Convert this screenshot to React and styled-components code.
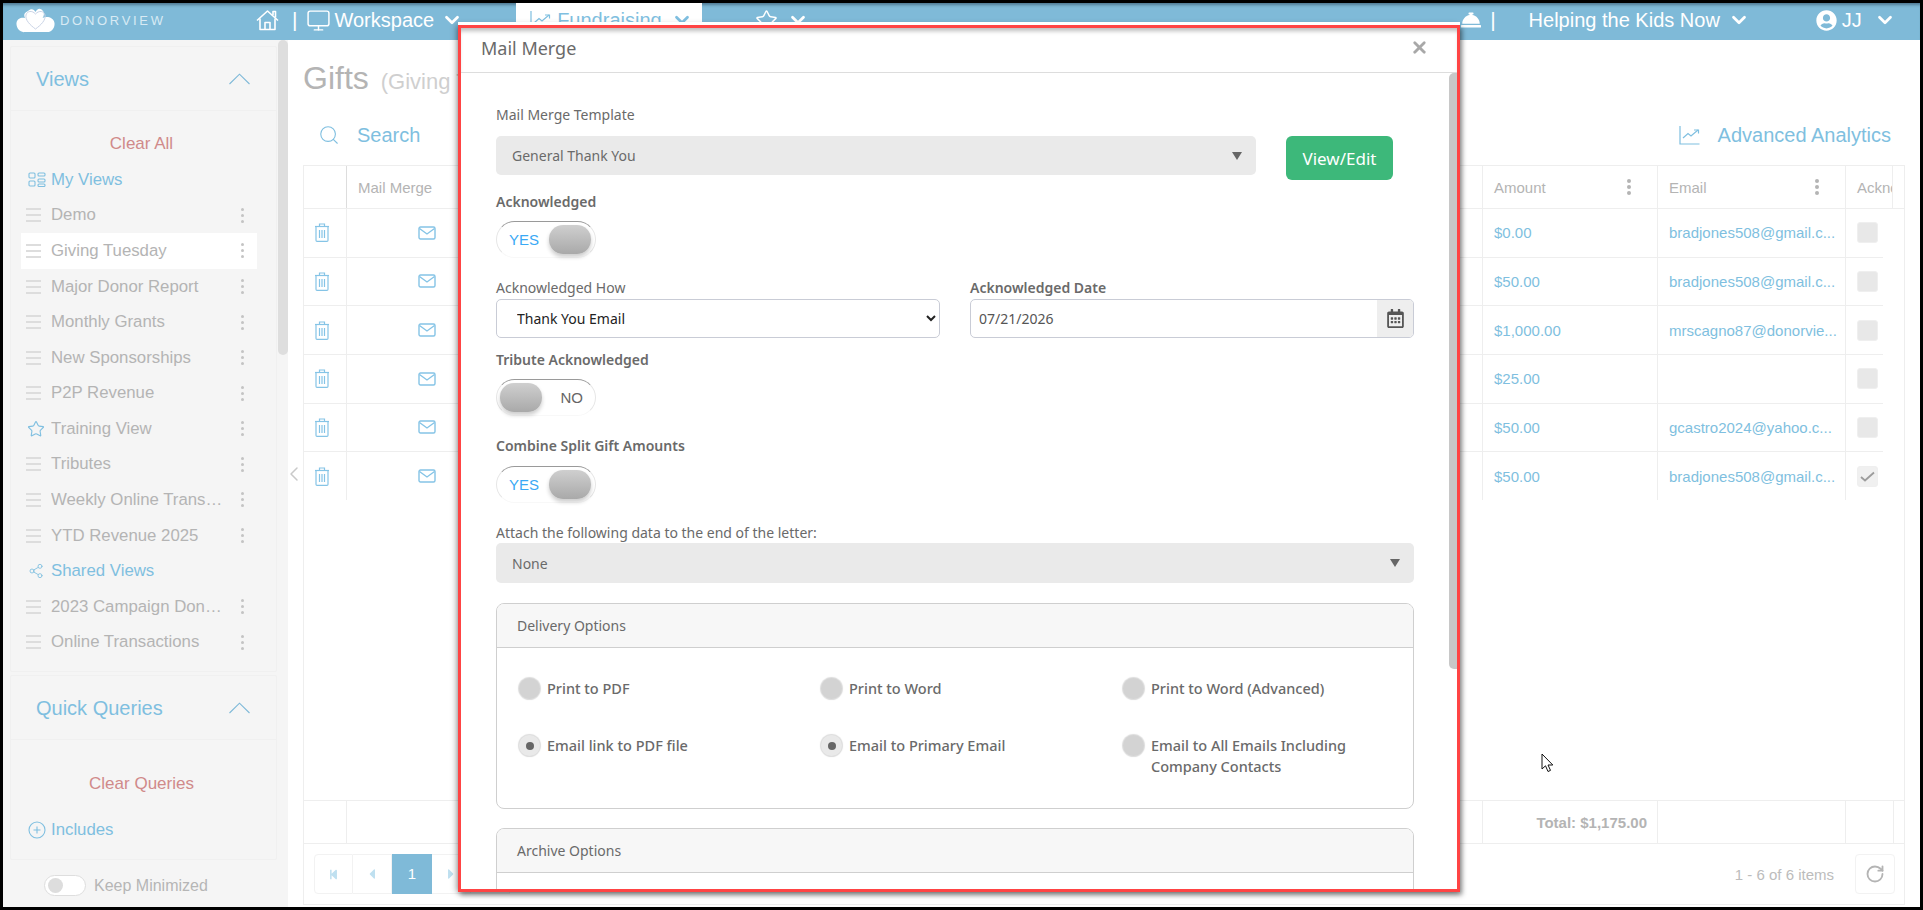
import React from 'react';
import styled, { createGlobalStyle } from 'styled-components';
import { ChevronDown, ChevronLeft, Monitor, Star, Search, Share2, RotateCw, X } from 'lucide-react';
import { FaConciergeBell, FaUserCircle, FaRegCalendarAlt, FaStepBackward, FaStepForward, FaCaretLeft, FaCaretRight } from 'react-icons/fa';

const sans = '"Liberation Sans", Arial, sans-serif';
const modalFont = '"Noto Sans", "Open Sans", sans-serif';
const blue = '#7fbfe0';
const line = '#eeeeee';

const GlobalStyle = createGlobalStyle`
  html, body {
    margin: 0;
    padding: 0;
    overflow: hidden;
    background: #000;
  }
  * {
    box-sizing: border-box;
  }
`;

const Frame = styled.div`
  position: relative;
  display: flex;
  flex-direction: column;
  width: 1923px;
  height: 910px;
  border: 3px solid #000;
  background: #fff;
  font-family: ${sans};
  overflow: hidden;
`;

/* top bar */
const TopBar = styled.header`
  display: flex;
  align-items: flex-start;
  flex: 0 0 37px;
  height: 37px;
  background: #7fbad8;
  box-shadow: inset 0 4px 3px -2px rgba(40, 70, 90, 0.55);
  color: #fff;
  font-size: 20px;
`;

const Logo = styled.div`
  display: flex;
  align-items: center;
  gap: 5px;
  width: 253px;
  height: 34px;
  padding-left: 13px;
`;

const LogoText = styled.span`
  color: #d8eaf4;
  font-size: 13px;
  letter-spacing: 2.7px;
`;

const NavItem = styled.div`
  display: flex;
  align-items: center;
  height: 34px;
  gap: ${(p) => p.$gap ?? 6}px;
  margin-left: ${(p) => p.$left ?? 0}px;
  white-space: nowrap;
`;

const NavChevron = styled(ChevronDown)`
  flex: none;
  margin-left: ${(p) => p.$left ?? 0}px;
`;

const ActiveTab = styled.div`
  display: flex;
  align-items: center;
  gap: 6px;
  width: 186px;
  height: 34px;
  margin-left: 53px;
  padding-left: 14px;
  background: #fff;
  color: ${blue};
`;

const Divider = styled.span`
  margin-left: ${(p) => p.$left}px;
  line-height: 34px;
  font-size: 21px;
`;

/* page body */
const Body = styled.div`
  display: flex;
  flex: 1;
  min-height: 0;
`;

const Sidebar = styled.aside`
  display: flex;
  flex-direction: column;
  flex: 0 0 285px;
  min-width: 0;
  background: #f5f5f5;
`;

const SideScroll = styled.div`
  display: flex;
  flex: 1;
  min-height: 0;
  padding-left: 7px;
  overflow: hidden;
`;

const PanelColumn = styled.div`
  flex: 0 0 267px;
  min-width: 0;
  padding-top: 6px;
  margin-right: 1px;
`;

const ThumbColumn = styled.div`
  flex: 0 0 10px;
`;

const SideThumb = styled.div`
  height: 315px;
  border-radius: 5px;
  background: #dedede;
`;

const Panel = styled.section`
  margin-top: ${(p) => p.$top ?? 0}px;
  padding-bottom: 11px;
  border: 1px solid #f0f0f0;
  border-radius: 2px;
`;

const PanelHead = styled.div`
  display: flex;
  align-items: center;
  justify-content: space-between;
  height: 64px;
  padding: 1px 26px 0 25px;
  border-bottom: 1px solid #f0f0f0;
  color: ${blue};
  font-size: 20px;
`;

const ClearLink = styled.div`
  height: 36px;
  margin-top: ${(p) => p.$top}px;
  padding-right: 4px;
  color: #d08a8a;
  font-size: 17px;
  line-height: 36px;
  text-align: center;
`;

const SideRow = styled.div`
  display: flex;
  align-items: center;
  height: 35.58px;
  margin: ${(p) => p.$top ?? 0}px 19px 0 10px;
  padding-left: 5px;
  background: ${(p) => (p.$active ? '#fff' : 'transparent')};
  color: ${(p) => (p.$link ? blue : '#b4b4b4')};
  font-size: 16.8px;
`;

const RowIcon = styled.span`
  display: flex;
  align-items: center;
  flex: 0 0 25px;
  padding-left: ${(p) => p.$inset ?? 0}px;
`;

const RowLabel = styled.span`
  flex: 1;
  min-width: 0;
  padding-right: 6px;
  overflow: hidden;
  text-overflow: ellipsis;
  white-space: nowrap;
`;

const RowKebab = styled.span`
  display: flex;
  flex: 0 0 28px;
  flex-direction: column;
  align-items: center;
  gap: 3px;
  padding-right: 1px;
  i {
    width: 3px;
    height: 3px;
    border-radius: 50%;
    background: #c4c4c4;
  }
`;

const MinimizeBar = styled.div`
  display: flex;
  align-items: center;
  flex: 0 0 46px;
  gap: 8px;
  padding: 3px 0 0 41px;
  color: #b6b6b6;
  font-size: 16px;
`;

const MiniSwitch = styled.span`
  display: flex;
  align-items: center;
  width: 42px;
  height: 21px;
  padding-left: 3px;
  border: 1px solid #dedede;
  border-radius: 11px;
  background: #fff;
  &::before {
    content: '';
    width: 15px;
    height: 15px;
    border-radius: 50%;
    background: #dddddd;
  }
`;

/* main table area */
const Gutter = styled.div`
  display: flex;
  align-items: center;
  flex: 0 0 15px;
  min-width: 0;
  color: #c9c9c9;
`;

const GutterChevron = styled(ChevronLeft)`
  flex: none;
  margin-left: -6px;
`;

const Main = styled.main`
  display: flex;
  flex-direction: column;
  flex: 1;
  min-width: 0;
  padding: 0 15px 2px 0;
`;

const TitleRow = styled.div`
  display: flex;
  align-items: baseline;
  gap: 12px;
  height: 58px;
  padding-top: 19px;
  line-height: 38px;
`;

const Title = styled.h1`
  margin: 0;
  color: #b4b4b4;
  font-size: 32px;
  font-weight: 400;
`;

const TitleNote = styled.span`
  color: #cfcfcf;
  font-size: 22px;
`;

const Toolbar = styled.div`
  display: flex;
  align-items: center;
  justify-content: space-between;
  height: 38px;
  margin: 18px 0 11px;
  padding: 0 14px 0 15px;
  color: ${blue};
  font-size: 20px;
`;

const ToolGroup = styled.div`
  display: flex;
  align-items: center;
  gap: ${(p) => p.$gap}px;
`;

const Table = styled.div`
  display: flex;
  flex-direction: column;
  flex: 1;
  min-height: 0;
  border: 1px solid ${line};
`;

const HeadRow = styled.div`
  display: grid;
  flex: 0 0 43px;
  grid-template-columns: 43px 1136px 175px 188px 47px 1fr;
  border-bottom: 1px solid ${line};
  color: #b4b4b4;
  font-size: 15px;
`;

const HeadCell = styled.div`
  display: flex;
  align-items: center;
  justify-content: space-between;
  padding: 0 26px 0 11px;
  overflow: hidden;
  white-space: nowrap;
  border-right: 1px solid ${(p) => (p.$strong ? '#dddddd' : line)};
`;

const HeadKebab = styled.span`
  display: flex;
  flex-direction: column;
  gap: 2px;
  i {
    width: 4px;
    height: 4px;
    border-radius: 50%;
    background: #b4b4b4;
  }
`;

const DataRow = styled.div`
  display: grid;
  flex: 0 0 48.67px;
  grid-template-columns: 43px 1136px 175px 188px 37px;
  width: 1579px;
  border-bottom: 1px solid ${(p) => (p.$last ? 'transparent' : line)};
  color: ${blue};
  font-size: 15px;
`;

const Cell = styled.div`
  display: flex;
  align-items: center;
  padding-left: ${(p) => p.$pad ?? 11}px;
  border-right: 1px solid ${(p) => (p.$bare ? 'transparent' : line)};
  overflow: hidden;
  white-space: nowrap;
`;

const CheckBox = styled.span`
  display: flex;
  align-items: center;
  justify-content: center;
  width: 21px;
  height: 21px;
  border: 1px solid #efefef;
  border-radius: 3px;
  background: ${(p) => (p.$checked ? '#f0f0f0' : '#e8e8e8')};
  color: #9c9c9c;
`;

const TableSpace = styled.div`
  flex: 1;
`;

const TotalRow = styled.div`
  display: grid;
  flex: 0 0 44px;
  grid-template-columns: 43px 1136px 175px 188px 48px 1fr;
  border-top: 1px solid ${line};
  border-bottom: 1px solid ${line};
`;

const TotalCell = styled.div`
  display: flex;
  align-items: center;
  justify-content: flex-end;
  padding-right: 10px;
  border-right: 1px solid ${line};
  color: #b4b4b4;
  font-size: 15px;
  font-weight: 700;
`;

const Pager = styled.div`
  display: flex;
  align-items: center;
  justify-content: space-between;
  flex: 0 0 60px;
  padding: 0 9px 0 10px;
`;

const PagerGroup = styled.div`
  display: flex;
  align-items: center;
`;

const PageButton = styled.span`
  display: flex;
  align-items: center;
  justify-content: center;
  width: 39px;
  height: 40px;
  border: 1px solid #f2f2f2;
  border-left-width: ${(p) => (p.$first ? 1 : 0)}px;
  border-radius: ${(p) => (p.$first ? '4px 0 0 4px' : '0')};
  color: #bfe0f0;
`;

const PageCurrent = styled.span`
  width: 40px;
  height: 40px;
  background: #7fbad8;
  color: #fff;
  font-size: 15px;
  line-height: 40px;
  text-align: center;
`;

const PageInfo = styled.span`
  margin-right: 21px;
  color: #bcbcbc;
  font-size: 15px;
`;

const RefreshButton = styled.span`
  display: flex;
  align-items: center;
  justify-content: center;
  width: 40px;
  height: 40px;
  border: 1px solid #f2f2f2;
  border-radius: 4px;
  color: #b4b4b4;
`;

/* modal */
const Modal = styled.div`
  position: absolute;
  top: 22px;
  left: 455px;
  display: flex;
  flex-direction: column;
  width: 1002px;
  height: 867px;
  border: 3.5px solid #ff4444;
  background: #fff;
  box-shadow: 0 -3px 0 #fff, 2px 3px 5px rgba(0, 0, 0, 0.45), -2px 0 6px rgba(0, 0, 0, 0.3);
  color: #6a6a6a;
  font-family: ${modalFont};
  overflow: hidden;
  z-index: 10;
`;

const ModalHead = styled.div`
  display: flex;
  align-items: center;
  justify-content: space-between;
  flex: 0 0 45px;
  padding: 0 28px 5px 20px;
  border-bottom: 1px solid #dddddd;
  box-shadow: inset 0 5px 4px -2px #bdbdbd;
  font-size: 18px;
`;

const CloseIcon = styled(X)`
  color: #a8a8a8;
`;

const ModalBody = styled.div`
  display: flex;
  flex: 1;
  min-height: 0;
`;

const ModalContent = styled.div`
  flex: 1;
  min-width: 0;
  padding: 32px 35px 0;
`;

const ModalTrack = styled.div`
  flex: 0 0 8px;
`;

const ModalThumb = styled.div`
  height: 596px;
  border-radius: 5px 0 0 5px;
  background: #c8c8c8;
`;

const FieldLabel = styled.div`
  height: 20px;
  margin-top: ${(p) => p.$top ?? 0}px;
  font-size: 14px;
  font-weight: ${(p) => (p.$strong ? 600 : 400)};
  line-height: 20px;
`;

const TemplateRow = styled.div`
  display: flex;
  align-items: flex-start;
  gap: 30px;
  margin-top: 11px;
`;

const GreySelect = styled.div`
  display: flex;
  align-items: center;
  justify-content: space-between;
  flex: ${(p) => (p.$wide ? '1' : '0 0 760px')};
  height: ${(p) => (p.$wide ? 40 : 39)}px;
  padding: 0 14px 0 16px;
  border-radius: 5px;
  background: #eaeaea;
  font-size: 14px;
`;

const Caret = styled.span`
  width: 0;
  height: 0;
  border-left: 5px solid transparent;
  border-right: 5px solid transparent;
  border-top: 8px solid #666;
`;

const GreenButton = styled.button`
  width: 107px;
  height: 44px;
  padding: 0;
  border: 0;
  border-radius: 6px;
  background: #3db87a;
  color: #fff;
  font-family: inherit;
  font-size: 17px;
`;

const Toggle = styled.div`
  display: flex;
  align-items: flex-start;
  justify-content: space-between;
  width: 100px;
  height: 37px;
  margin-top: ${(p) => p.$top}px;
  padding: 3px 4px 0 ${(p) => (p.$on ? 12 : 3)}px;
  border: 1px solid #e6e6e6;
  border-top-color: #9a9a9a;
  border-bottom-color: #f8f8f8;
  border-radius: 19px;
  color: ${(p) => (p.$on ? '#3aa9f5' : '#666')};
  font-family: ${sans};
  font-size: 15px;
  line-height: 29px;
`;

const Knob = styled.span`
  width: 42px;
  height: 29px;
  border-radius: 14px;
  background: linear-gradient(#cfcfcf, #a9a9a9);
  box-shadow: 0 3px 4px rgba(0, 0, 0, 0.2);
`;

const NoText = styled.span`
  margin-right: 8px;
`;

const DateGrid = styled.div`
  display: grid;
  grid-template-columns: 444px 444px;
  column-gap: 30px;
  margin-top: 20px;
`;

const NativeSelect = styled.select`
  display: block;
  width: 100%;
  height: 39px;
  margin-top: 1px;
  padding: 0 5px 0 16px;
  border: 1px solid #c9ccd6;
  border-radius: 5px;
  background: #fff;
  color: #222;
  font-family: inherit;
  font-size: 14px;
`;

const DateBox = styled.div`
  display: flex;
  height: 39px;
  margin-top: 1px;
  border: 1px solid #c9ccd6;
  border-radius: 5px;
  overflow: hidden;
`;

const DateValue = styled.div`
  flex: 1;
  padding-left: 8px;
  color: #555;
  font-size: 14px;
  line-height: 37px;
`;

const DateAddon = styled.div`
  display: flex;
  align-items: center;
  justify-content: center;
  flex: 0 0 36px;
  background: #eeeeee;
  color: #555;
`;

const OptionsPanel = styled.section`
  margin-top: ${(p) => p.$top}px;
  border: 1px solid #cfcfcf;
  border-radius: 8px;
  overflow: hidden;
`;

const OptionsHead = styled.div`
  height: 44px;
  padding-left: 20px;
  border-bottom: 1px solid #cfcfcf;
  background: #f7f7f7;
  font-size: 14px;
  line-height: 43px;
`;

const OptionsGrid = styled.div`
  display: grid;
  grid-template-columns: repeat(3, 302px);
  grid-auto-rows: 57px;
  height: 160px;
  padding: 30px 0 0 22px;
`;

const RadioOption = styled.div`
  display: flex;
  align-items: flex-start;
  gap: 7px;
  font-size: 14.5px;
  font-weight: 500;
  line-height: 21px;
`;

const RadioDot = styled.span`
  display: flex;
  align-items: center;
  justify-content: center;
  flex: 0 0 21px;
  height: 21px;
  border-radius: 50%;
  background: ${(p) => (p.$checked ? '#e9e9e9' : '#d3d3d3')};
  box-shadow: 0 0 1px 1px #dcdcdc;
  &::after {
    content: '';
    display: ${(p) => (p.$checked ? 'block' : 'none')};
    width: 8px;
    height: 8px;
    border-radius: 50%;
    background: #666;
  }
`;

const Cursor = styled.svg`
  position: absolute;
  top: 750px;
  left: 1538px;
  z-index: 20;
`;

/* drawn icons */
const LogoMark = () => (
  <svg width="39" height="25" viewBox="0 0 39 25">
    <path d="M12 3c3-3 6-2 7.500 1C21 1 24-1 27 3c1.500 2 1 5-.5 7 4-2 11-1 12 5 .5 5-3 9-7 9H9c-5 1-9-4-8.500-9C1 10 6 9 9 10c-1.500-3-1-5 3-7z" fill="#fff" />
    <path d="M19.500 21C14 17 9 12 10 7c1-4 6-5 9.500-1 3.500-4 8.500-3 9.500 1 1 5-4 10-9.500 14z" fill="none" stroke="#c9d3e6" strokeWidth="1" />
  </svg>
);

const HomeIcon = () => (
  <svg width="23" height="22" viewBox="0 0 23 22" fill="none" stroke="#fff" strokeWidth="1.600" strokeLinejoin="round">
    <path d="M1 11.500 11.500 2 22 11.500" />
    <path d="M4 9.500V20.500H19V9.500" />
    <path d="M9 20.500V13.500H14V20.500" />
    <path d="M17 6V2.500H19.500V8.500" />
  </svg>
);

const ChartIcon = ({ color }) => (
  <svg width="21" height="19" viewBox="0 0 21 19" fill="none" stroke={color} strokeWidth="1.200">
    <path d="M1 0V18H20.500" />
    <path d="M4 12 9 7.500 12 10 19 4" />
    <path d="M15 4H19.500V7.500" />
  </svg>
);

const BurgerIcon = () => (
  <svg width="15" height="14" viewBox="0 0 15 14" fill="#dddddd">
    <rect y="0" width="15" height="2" />
    <rect y="6" width="15" height="2" />
    <rect y="12" width="15" height="2" />
  </svg>
);

const ViewsIcon = () => (
  <svg width="18" height="15" viewBox="0 0 18 15" fill="none" stroke={blue} strokeWidth="1.100">
    <rect x="1" y="1" width="6" height="5" rx="1" />
    <rect x="10" y="1" width="7" height="3" rx="1" />
    <rect x="1" y="9" width="6" height="5" rx="1" />
    <rect x="10" y="7" width="7" height="3" rx="1" />
    <rect x="10" y="12" width="7" height="2.500" rx="1" />
  </svg>
);

const PlusCircle = () => (
  <svg width="18" height="18" viewBox="0 0 18 18" fill="none" stroke={blue} strokeWidth="1.100">
    <circle cx="9" cy="9" r="8" />
    <path d="M9 5.500V12.500M5.500 9H12.500" />
  </svg>
);

const CollapseIcon = () => (
  <svg width="21" height="12" viewBox="0 0 21 12" fill="none" stroke="#7fb9d8" strokeWidth="1.100">
    <path d="M.5 11 10.500 1.200 20.500 11" />
  </svg>
);

const TrashIcon = () => (
  <svg width="16" height="19" viewBox="0 0 16 19" fill="none" stroke="#85c4e6" strokeWidth="1.200">
    <path d="M1 3.500H15" />
    <path d="M5.500 3V1H10.500V3" />
    <path d="M2 4V17.200C2 17.800 2.500 18.300 3 18.300H13C13.500 18.300 14 17.800 14 17.200V4" />
    <path d="M5.500 7V15M8 7V15M10.500 7V15" />
  </svg>
);

const MailIcon = () => (
  <svg width="18" height="14" viewBox="0 0 18 14" fill="none" stroke="#85c4e6" strokeWidth="1.400">
    <rect x="1" y="1" width="16" height="12" rx="1.500" />
    <path d="M1.500 2.500 9 8 16.500 2.500" />
  </svg>
);

const CheckMark = () => (
  <svg width="15" height="11" viewBox="0 0 15 11" fill="none" stroke="currentColor" strokeWidth="1.800">
    <path d="M1 6 5 9.500 14 1.500" />
  </svg>
);

const Kebab = () => (
  <RowKebab>
    <i />
    <i />
    <i />
  </RowKebab>
);

const viewRows = [
  { label: 'Demo' },
  { label: 'Giving Tuesday', active: true },
  { label: 'Major Donor Report' },
  { label: 'Monthly Grants' },
  { label: 'New Sponsorships' },
  { label: 'P2P Revenue' },
  { label: 'Training View', star: true },
  { label: 'Tributes' },
  { label: 'Weekly Online Transactions' },
  { label: 'YTD Revenue 2025' },
];

const sharedRows = ['2023 Campaign Donations', 'Online Transactions'];

const gifts = [
  { amount: '$0.00', email: 'bradjones508@gmail.c...' },
  { amount: '$50.00', email: 'bradjones508@gmail.c...' },
  { amount: '$1,000.00', email: 'mrscagno87@donorvie...' },
  { amount: '$25.00', email: '' },
  { amount: '$50.00', email: 'gcastro2024@yahoo.c...' },
  { amount: '$50.00', email: 'bradjones508@gmail.c...', checked: true },
];

function ViewRow({ label, active, star }) {
  return (
    <SideRow $active={active}>
      <RowIcon $inset={star ? 1 : 0}>
        {star ? <Star size={18} color={blue} strokeWidth={1.500} /> : <BurgerIcon />}
      </RowIcon>
      <RowLabel>{label}</RowLabel>
      <Kebab />
    </SideRow>
  );
}

function OnOff({ on, top }) {
  return (
    <Toggle $on={on} $top={top}>
      {on ? (
        <>
          YES
          <Knob />
        </>
      ) : (
        <>
          <Knob />
          <NoText>NO</NoText>
        </>
      )}
    </Toggle>
  );
}

export default function App() {
  return (
    <Frame>
      <GlobalStyle />
      <TopBar>
        <Logo>
          <LogoMark />
          <LogoText>DONORVIEW</LogoText>
        </Logo>
        <NavItem>
          <HomeIcon />
        </NavItem>
        <Divider $left={13}>|</Divider>
        <NavItem $left={9} $gap={3}>
          <Monitor size={25} strokeWidth={1.400} />
          Workspace
          <NavChevron size={22} strokeWidth={3} $left={4} />
        </NavItem>
        <ActiveTab>
          <ChartIcon color={blue} />
          Fundraising
          <NavChevron size={22} strokeWidth={3} $left={3} />
        </ActiveTab>
        <NavItem $left={53} $gap={9}>
          <Star size={23} strokeWidth={1.500} />
          <NavChevron size={22} strokeWidth={3} />
        </NavItem>
        <NavItem $left={652}>
          <FaConciergeBell size={20} />
        </NavItem>
        <Divider $left={9}>|</Divider>
        <NavItem $left={33} $gap={8}>
          Helping the Kids Now
          <NavChevron size={22} strokeWidth={3} />
        </NavItem>
        <NavItem $left={66} $gap={5}>
          <FaUserCircle size={21} />
          JJ
          <NavChevron size={22} strokeWidth={3} $left={7} />
        </NavItem>
      </TopBar>

      <Body>
        <Sidebar>
          <SideScroll>
            <PanelColumn>
              <Panel>
                <PanelHead>
                  Views
                  <CollapseIcon />
                </PanelHead>
                <ClearLink $top={15}>Clear All</ClearLink>
                <SideRow $link>
                  <RowIcon $inset={2}>
                    <ViewsIcon />
                  </RowIcon>
                  <RowLabel>My Views</RowLabel>
                </SideRow>
                {viewRows.map((row) => (
                  <ViewRow key={row.label} {...row} />
                ))}
                <SideRow $link>
                  <RowIcon $inset={2}>
                    <Share2 size={16} strokeWidth={1.300} />
                  </RowIcon>
                  <RowLabel>Shared Views</RowLabel>
                </SideRow>
                {sharedRows.map((label) => (
                  <ViewRow key={label} label={label} />
                ))}
              </Panel>
              <Panel $top={3}>
                <PanelHead>
                  Quick Queries
                  <CollapseIcon />
                </PanelHead>
                <ClearLink $top={26}>Clear Queries</ClearLink>
                <SideRow $link $top={10}>
                  <RowIcon $inset={2}>
                    <PlusCircle />
                  </RowIcon>
                  <RowLabel>Includes</RowLabel>
                </SideRow>
              </Panel>
            </PanelColumn>
            <ThumbColumn>
              <SideThumb />
            </ThumbColumn>
          </SideScroll>
          <MinimizeBar>
            <MiniSwitch />
            Keep Minimized
          </MinimizeBar>
        </Sidebar>

        <Gutter>
          <GutterChevron size={24} strokeWidth={1.500} />
        </Gutter>

        <Main>
          <TitleRow>
            <Title>Gifts</Title>
            <TitleNote>(Giving Tuesday)</TitleNote>
          </TitleRow>
          <Toolbar>
            <ToolGroup $gap={17}>
              <Search size={22} strokeWidth={1.200} />
              Search
            </ToolGroup>
            <ToolGroup $gap={18}>
              <ChartIcon color={blue} />
              Advanced Analytics
            </ToolGroup>
          </Toolbar>

          <Table>
            <HeadRow>
              <HeadCell $strong />
              <HeadCell>Mail Merge</HeadCell>
              <HeadCell>
                Amount
                <HeadKebab>
                  <i />
                  <i />
                  <i />
                </HeadKebab>
              </HeadCell>
              <HeadCell>
                Email
                <HeadKebab>
                  <i />
                  <i />
                  <i />
                </HeadKebab>
              </HeadCell>
              <HeadCell>Acknowledged</HeadCell>
            </HeadRow>

            {gifts.map((gift, i) => (
              <DataRow key={i} $last={i === gifts.length - 1}>
                <Cell $pad={10}>
                  <TrashIcon />
                </Cell>
                <Cell $pad={71}>
                  <MailIcon />
                </Cell>
                <Cell>{gift.amount}</Cell>
                <Cell>{gift.email}</Cell>
                <Cell $bare>
                  <CheckBox $checked={gift.checked}>{gift.checked && <CheckMark />}</CheckBox>
                </Cell>
              </DataRow>
            ))}

            <TableSpace />

            <TotalRow>
              <TotalCell />
              <TotalCell />
              <TotalCell>Total: $1,175.00</TotalCell>
              <TotalCell />
              <TotalCell />
            </TotalRow>

            <Pager>
              <PagerGroup>
                <PageButton $first>
                  <FaStepBackward size={11} />
                </PageButton>
                <PageButton>
                  <FaCaretLeft size={16} />
                </PageButton>
                <PageCurrent>1</PageCurrent>
                <PageButton>
                  <FaCaretRight size={16} />
                </PageButton>
                <PageButton>
                  <FaStepForward size={11} />
                </PageButton>
              </PagerGroup>
              <PagerGroup>
                <PageInfo>1 - 6 of 6 items</PageInfo>
                <RefreshButton>
                  <RotateCw size={20} strokeWidth={2.200} />
                </RefreshButton>
              </PagerGroup>
            </Pager>
          </Table>
        </Main>
      </Body>

      <Modal>
        <ModalHead>
          Mail Merge
          <CloseIcon size={19} strokeWidth={3.500} />
        </ModalHead>
        <ModalBody>
          <ModalContent>
            <FieldLabel>Mail Merge Template</FieldLabel>
            <TemplateRow>
              <GreySelect>
                General Thank You
                <Caret />
              </GreySelect>
              <GreenButton>View/Edit</GreenButton>
            </TemplateRow>

            <FieldLabel $strong $top={12}>
              Acknowledged
            </FieldLabel>
            <OnOff on top={9} />

            <DateGrid>
              <div>
                <FieldLabel>Acknowledged How</FieldLabel>
                <NativeSelect defaultValue="Thank You Email">
                  <option>Thank You Email</option>
                  <option>Letter</option>
                  <option>Phone Call</option>
                </NativeSelect>
              </div>
              <div>
                <FieldLabel $strong>Acknowledged Date</FieldLabel>
                <DateBox>
                  <DateValue>07/21/2026</DateValue>
                  <DateAddon>
                    <FaRegCalendarAlt size={19} />
                  </DateAddon>
                </DateBox>
              </div>
            </DateGrid>

            <FieldLabel $strong $top={12}>
              Tribute Acknowledged
            </FieldLabel>
            <OnOff top={9} />

            <FieldLabel $strong $top={20}>
              Combine Split Gift Amounts
            </FieldLabel>
            <OnOff on top={10} />

            <FieldLabel $top={20}>Attach the following data to the end of the letter:</FieldLabel>
            <GreySelect $wide>
              None
              <Caret />
            </GreySelect>

            <OptionsPanel $top={20}>
              <OptionsHead>Delivery Options</OptionsHead>
              <OptionsGrid>
                <RadioOption>
                  <RadioDot />
                  Print to PDF
                </RadioOption>
                <RadioOption>
                  <RadioDot />
                  Print to Word
                </RadioOption>
                <RadioOption>
                  <RadioDot />
                  Print to Word (Advanced)
                </RadioOption>
                <RadioOption>
                  <RadioDot $checked />
                  Email link to PDF file
                </RadioOption>
                <RadioOption>
                  <RadioDot $checked />
                  Email to Primary Email
                </RadioOption>
                <RadioOption>
                  <RadioDot />
                  <span>
                    Email to All Emails Including
                    <br />
                    Company Contacts
                  </span>
                </RadioOption>
              </OptionsGrid>
            </OptionsPanel>

            <OptionsPanel $top={19}>
              <OptionsHead>Archive Options</OptionsHead>
              <OptionsGrid />
            </OptionsPanel>
          </ModalContent>
          <ModalTrack>
            <ModalThumb />
          </ModalTrack>
        </ModalBody>
      </Modal>

      <Cursor width="13" height="21" viewBox="0 0 13 21">
        <path d="M1 1V16L4.500 12.800 7 18.500 9.500 17.400 7 12H11.800Z" fill="#fff" stroke="#111" strokeWidth="1" />
      </Cursor>
    </Frame>
  );
}
